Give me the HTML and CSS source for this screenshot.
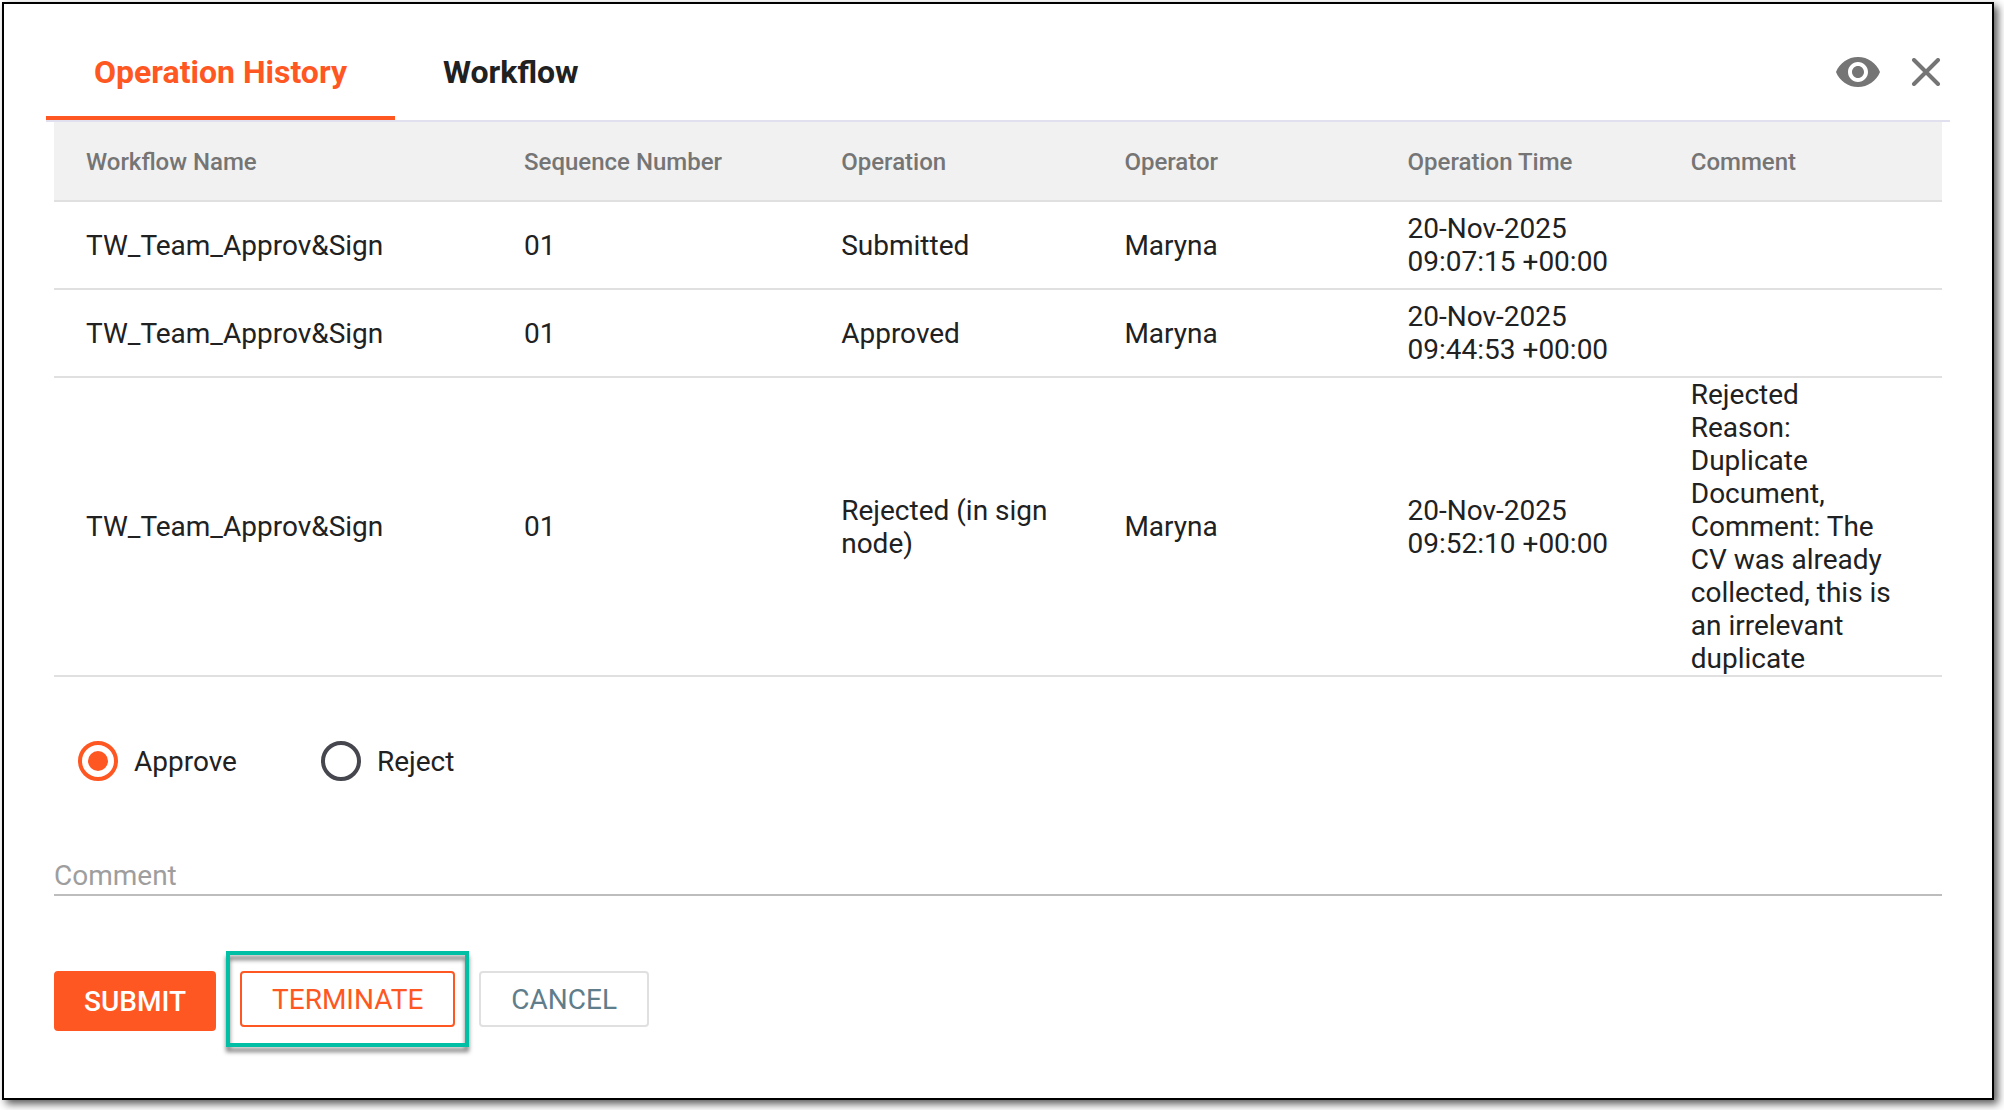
FILE: index.html
```html
<!DOCTYPE html>
<html lang="en">
<head>
  <meta charset="utf-8">
  <meta name="viewport" content="width=device-width, initial-scale=1">
  <title>Operation History</title>
  <link rel="stylesheet" href="styles.css">
</head>
<body>
  <main class="dialog">
    <header class="dialog-header">
      <div class="tabs" role="tablist">
        <button class="tab tab-active" type="button" role="tab" aria-selected="true">Operation History</button>
        <button class="tab" type="button" role="tab" aria-selected="false">Workflow</button>
      </div>
      <div class="header-actions">
        <button class="icon-button" type="button" aria-label="Preview">
          <svg class="icon-eye" viewBox="0 0 24 24" aria-hidden="true"><path d="M12 4.5C7 4.5 2.73 7.61 1 12c1.73 4.39 6 7.5 11 7.5s9.27-3.11 11-7.5c-1.73-4.39-6-7.5-11-7.5zM12 17c-2.76 0-5-2.24-5-5s2.24-5 5-5 5 2.24 5 5-2.24 5-5 5zm0-8c-1.66 0-3 1.34-3 3s1.34 3 3 3 3-1.34 3-3-1.34-3-3-3z"/></svg>
        </button>
        <button class="icon-button" type="button" aria-label="Close">
          <svg class="icon-close" viewBox="0 0 28 28" aria-hidden="true"><path d="M2 2L26 26M26 2L2 26"/></svg>
        </button>
      </div>
    </header>

    <form class="dialog-body">
      <table class="history">
        <colgroup>
          <col class="col-name">
          <col class="col-sequence">
          <col class="col-default">
          <col class="col-default">
          <col class="col-default">
          <col class="col-default">
        </colgroup>
        <thead>
          <tr>
            <th scope="col">Workflow Name</th>
            <th scope="col">Sequence Number</th>
            <th scope="col">Operation</th>
            <th scope="col">Operator</th>
            <th scope="col">Operation Time</th>
            <th scope="col">Comment</th>
          </tr>
        </thead>
        <tbody>
          <tr>
            <td>TW_Team_Approv&amp;Sign</td>
            <td>01</td>
            <td>Submitted</td>
            <td>Maryna</td>
            <td>20-Nov-2025 09:07:15 +00:00</td>
            <td></td>
          </tr>
          <tr>
            <td>TW_Team_Approv&amp;Sign</td>
            <td>01</td>
            <td>Approved</td>
            <td>Maryna</td>
            <td>20-Nov-2025 09:44:53 +00:00</td>
            <td></td>
          </tr>
          <tr>
            <td>TW_Team_Approv&amp;Sign</td>
            <td>01</td>
            <td>Rejected (in sign node)</td>
            <td>Maryna</td>
            <td>20-Nov-2025 09:52:10 +00:00</td>
            <td>Rejected Reason: Duplicate Document, Comment: The CV was already collected, this is an irrelevant duplicate</td>
          </tr>
        </tbody>
      </table>

      <div class="decision" role="radiogroup" aria-label="Decision">
        <label class="radio"><input type="radio" name="decision" value="approve" checked>Approve</label>
        <label class="radio"><input type="radio" name="decision" value="reject">Reject</label>
      </div>

      <input class="comment" type="text" placeholder="Comment" aria-label="Comment">

      <div class="actions">
        <button class="button button-primary" type="button">SUBMIT</button>
        <div class="highlighted">
          <button class="button button-danger" type="button">TERMINATE</button>
        </div>
        <button class="button button-neutral" type="button">CANCEL</button>
      </div>
    </form>
  </main>
</body>
</html>
```
FILE: styles.css
```css
* {
  box-sizing: border-box;
}

body {
  margin: 0;
  padding: 2px 10px 10px 2px;
  background: #fff;
  color: #212121;
  font-family: Roboto, sans-serif;
  font-size: 28px;
  line-height: 33px;
}

button,
input {
  margin: 0;
  font: inherit;
}

.dialog {
  min-height: calc(100vh - 12px);
  padding: 20px 42px;
  border: 2px solid #000;
  background: #fff;
  box-shadow: 4px 4px 8px rgba(0, 0, 0, 0.65);
}

.dialog-header {
  display: flex;
  justify-content: space-between;
  border-bottom: 2px solid #e1e0ef;
}

.tabs {
  display: flex;
}

.tab {
  height: 96px;
  padding: 4px 48px 0;
  border: 0;
  border-bottom: 4px solid transparent;
  background: none;
  color: #212121;
  font-size: 32px;
  font-weight: 700;
}

.tab-active {
  border-bottom-color: #ff5722;
  color: #ff5722;
}

.header-actions {
  display: flex;
  align-items: center;
  gap: 24px;
  padding-right: 4px;
}

.icon-button {
  display: flex;
  padding: 0;
  border: 0;
  background: none;
}

.icon-eye {
  width: 48px;
  height: 48px;
  fill: #757575;
}

.icon-close {
  width: 40px;
  height: 28px;
  fill: none;
  stroke: #757575;
  stroke-width: 4;
  stroke-linecap: round;
}

.dialog-body {
  padding: 0 8px;
}

.history {
  width: 100%;
  border-collapse: separate;
  border-spacing: 0;
  table-layout: fixed;
}

.col-name {
  width: 23.2%;
}

.col-sequence {
  width: 16.8%;
}

.col-default {
  width: 15%;
}

.history th,
.history td {
  padding: 0 40px 0 32px;
  border-bottom: 2px solid #e0e0e0;
  text-align: left;
  vertical-align: middle;
}

.history th {
  height: 80px;
  padding-top: 2px;
  background: #f1f1f1;
  color: #757575;
  font-size: 24px;
  font-weight: 500;
  white-space: nowrap;
}

.history td {
  height: 88px;
}

.decision {
  display: flex;
  gap: 84px;
  padding: 64px 24px 80px;
}

.radio {
  display: flex;
  align-items: center;
  gap: 16px;
}

.radio input {
  display: grid;
  place-content: center;
  width: 40px;
  height: 40px;
  border: 4px solid #46464f;
  border-radius: 50%;
  appearance: none;
}

.radio input:checked {
  border-color: #ff5722;
}

.radio input:checked::before {
  width: 20px;
  height: 20px;
  border-radius: 50%;
  background: #ff5722;
  content: "";
}

.comment {
  display: block;
  width: 100%;
  height: 35px;
  padding: 0 0 4px;
  border: 0;
  border-bottom: 2px solid #bdbdbd;
  outline: 0;
  background: none;
  color: inherit;
}

.comment::placeholder {
  color: #9e9e9e;
  opacity: 1;
}

.actions {
  display: flex;
  align-items: flex-start;
  gap: 24px;
  padding-top: 75px;
}

.button {
  height: 56px;
  padding: 0 30px;
  border: 2px solid;
  border-radius: 4px;
  background: #fff;
}

.button-primary {
  height: 60px;
  padding: 0 28px;
  border-color: #ff5722;
  background: #ff5722;
  color: #fff;
  font-weight: 500;
}

.button-danger {
  border-color: #ff5722;
  color: #ff5722;
}

.button-neutral {
  border-color: #e0e0e0;
  color: #607d8b;
}

.highlighted {
  position: relative;
}

.highlighted::after {
  position: absolute;
  inset: -20px -14px;
  border: 4px solid #00bfa5;
  filter: drop-shadow(0 5px 2px rgba(0, 0, 0, 0.5));
  content: "";
  pointer-events: none;
}
```
